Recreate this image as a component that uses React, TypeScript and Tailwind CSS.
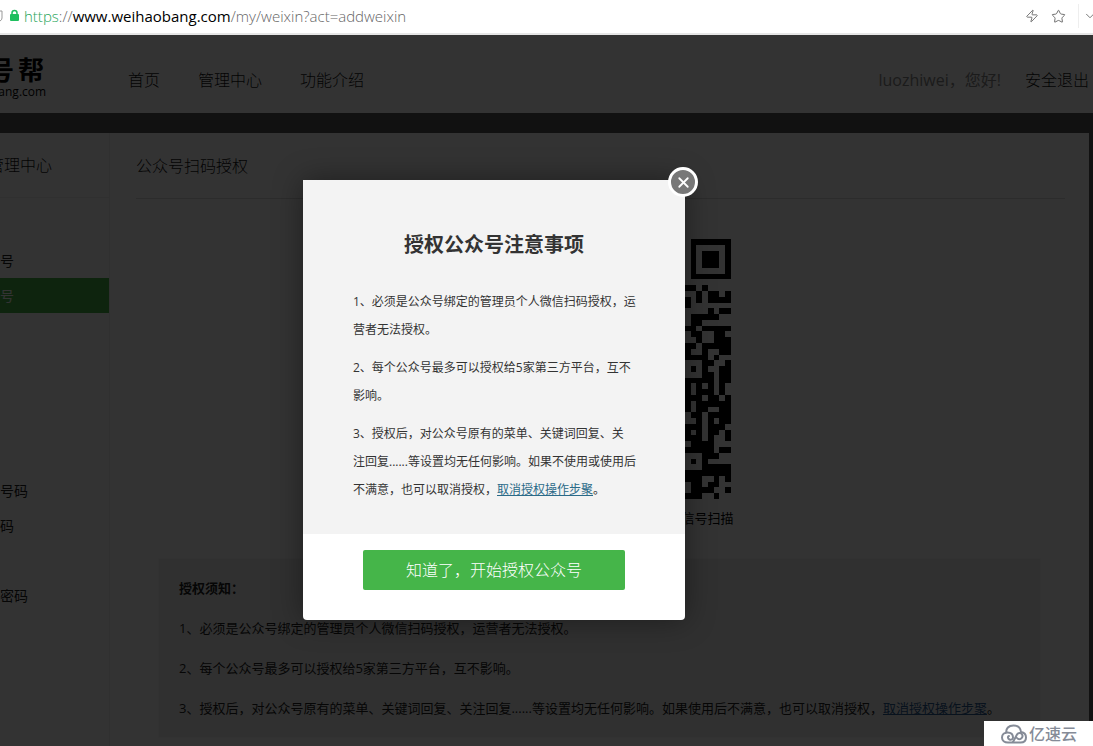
import { ChevronDown, Star, X, Zap } from 'lucide-react';

const navLinks = ['首页', '管理中心', '功能介绍'];

const accountItems = [
  { label: '号', active: false },
  { label: '号', active: true },
];

const notices = [
  '1、必须是公众号绑定的管理员个人微信扫码授权，运营者无法授权。',
  '2、每个公众号最多可以授权给5家第三方平台，互不影响。',
];

// one string per row, 1 = dark module
const qrRows = [
  '01111111', '01000001', '01011101', '01011101', '01011101', '01000001', '01111111', '00000000',
  '11010000', '00101101', '10101111', '10000000', '00001011', '01111100', '01100000', '11011111',
  '01100110', '00100111', '11011111', '10010011', '11110100', '00011001', '01010011', '00011011',
  '11111011', '10101010', '10111010', '11101101', '10111111', '10110011', '01101111', '00101011',
  '11101110', '10101101', '11101001', '01111000', '11111011', '00011100', '01010000', '00011111',
  '11111111', '11100101', '01101100', '01111001', '11100100',
];

function QrCode() {
  return (
    <svg viewBox="0 0 45 45" className="h-[260px] w-[260px]" shapeRendering="crispEdges" aria-label="二维码">
      {qrRows.map((row, y) =>
        row.split('').map((cell, x) =>
          cell === '1' ? <rect key={`${x}-${y}`} x={x + 37} y={y} width="1" height="1" fill="#000" /> : null
        )
      )}
    </svg>
  );
}

function AddressBar() {
  return (
    <div className="flex h-[35px] items-center overflow-hidden border-b-2 border-[#e6e6e6] bg-white pb-px">
      <svg viewBox="0 0 24 14" className="h-[14px] w-6 shrink-0" fill="none">
        <path d="M0 2h2v7q0 2-2 3" stroke="#999" />
        <rect x="10" y="5" width="9" height="7" rx="1" fill="#1fbf5f" />
        <path d="M12 6V4a2.5 2.5 0 0 1 5 0v2" stroke="#1fbf5f" strokeWidth="1.5" />
      </svg>
      <p className="flex-1 text-[15px] leading-5 font-light whitespace-nowrap text-[#666]">
        <span className="text-[#1fa55a]">https</span>://
        <span className="font-normal text-black">www.weihaobang.com</span>/my/weixin?act=addweixin
      </p>
      <div className="flex shrink-0 items-center text-[#666]">
        <button aria-label="加速"><Zap size={14} strokeWidth={1.5} /></button>
        <button aria-label="收藏" className="ml-3"><Star size={15} strokeWidth={1.5} /></button>
        <span className="ml-3 h-6 w-px bg-[#eee]" />
        <button aria-label="更多" className="-mr-1 ml-1"><ChevronDown size={14} strokeWidth={1.5} /></button>
      </div>
    </div>
  );
}

function Header() {
  return (
    <header className="flex h-[78px] items-center bg-white pr-1 pt-3 text-base font-light text-[#111]">
      <div className="-ml-3 w-[140px] pb-1 text-black">
        <div className="flex gap-1 text-[26px] leading-7 font-bold">
          <span>号</span>
          <span>帮</span>
        </div>
        <div className="pl-[3px] text-xs leading-4 font-normal">bang.com</div>
      </div>
      <nav className="flex flex-1 gap-[38px]">
        {navLinks.map((link) => (
          <a key={link} href="#">{link}</a>
        ))}
      </nav>
      <span className="font-normal text-[#888]">luozhiwei，您好!</span>
      <a href="#" className="ml-6">安全退出</a>
    </header>
  );
}

function Sidebar() {
  return (
    <aside className="w-[110px] shrink-0 overflow-hidden border-r border-[#eee] text-sm leading-[35px] text-[#222]">
      <h2 className="-ml-3 h-[65px] border-b border-[#eee] text-base leading-[65px] font-light text-[#111]">管理中心</h2>
      <ul className="pt-[45px]">
        {accountItems.map((item, i) => (
          <li key={i}>
            <a href="#" className={item.active ? 'block bg-[#45b549] text-white' : 'block'}>{item.label}</a>
          </li>
        ))}
      </ul>
      <ul className="pt-[160px]">
        <li><a href="#" className="block">号码</a></li>
        <li><a href="#" className="block">码</a></li>
        <li className="pt-[35px]"><a href="#" className="block">密码</a></li>
      </ul>
    </aside>
  );
}

function AuthorizeModal() {
  return (
    <div className="absolute inset-0 flex items-start justify-center bg-black/80 pr-[105px] pt-[145px]">
      <div role="dialog" aria-labelledby="dialog-title" className="relative w-[382px] rounded-sm bg-white shadow-[0_0_30px_rgba(0,0,0,0.4)]">
        <button
          aria-label="关闭"
          className="absolute -right-[13px] -top-[13px] flex h-[30px] w-[30px] items-center justify-center rounded-full border-3 border-white bg-[#777] text-white"
        >
          <X size={17} strokeWidth={2.5} />
        </button>
        <div className="h-[354px] bg-[#f3f3f3] px-[50px] pt-[49px] text-xs leading-7 text-[#333]">
          <h1 id="dialog-title" className="mb-[27px] text-center text-xl leading-8 font-bold">授权公众号注意事项</h1>
          <div className="-mr-1 space-y-[10px]">
            <p>1、必须是公众号绑定的管理员个人微信扫码授权，运<br />营者无法授权。</p>
            <p>2、每个公众号最多可以授权给5家第三方平台，互不<br />影响。</p>
            <p>
              3、授权后，对公众号原有的菜单、关键词回复、关<br />
              注回复......等设置均无任何影响。如果不使用或使用后<br />
              不满意，也可以取消授权，<a href="#" className="text-[#2a6a88] underline">取消授权操作步聚</a>。
            </p>
          </div>
        </div>
        <div className="px-[60px] pb-[30px] pt-4">
          <button className="h-10 w-full rounded-xs bg-[#45b549] text-base font-light text-white">知道了，开始授权公众号</button>
        </div>
      </div>
    </div>
  );
}

function Watermark() {
  return (
    <div className="absolute bottom-0 right-0 flex h-[25px] w-[109px] items-center justify-end gap-[2px] bg-white pr-4 text-base text-[#858b97]">
      <svg viewBox="0 0 26 20" className="h-5 w-[26px]" fill="none" stroke="currentColor" strokeWidth="2" strokeLinecap="round">
        <path d="M5 9C5 4 8 1.500 12.500 1.500C16.500 1.500 19.500 4 20 8C23 8.500 25 10.500 25 13.500C25 16.500 23 18.500 19.500 18.500H7C3.500 18.500 1 16.500 1 13.500C1 10.500 3.500 8.500 6.500 8.500C10 8.500 12 10.500 12 13.500C12 15.500 10 16 8.500 15.500C6.500 14.500 6.500 12.500 8 12" />
        <path d="M12 18L16 10.500C17.500 8 21 8.500 21.500 11.500C22 14.500 18 16.500 16 14" />
      </svg>
      <span className="font-medium whitespace-nowrap">亿速云</span>
    </div>
  );
}

export default function App() {
  return (
    <div className="flex h-screen flex-col overflow-hidden font-['Open_Sans','Noto_Sans_CJK_SC',sans-serif]">
      <AddressBar />
      <div className="relative flex flex-1 flex-col overflow-hidden bg-[#555]">
        <Header />
        <div className="mr-1 mt-5 flex flex-1 bg-white">
          <Sidebar />
          <main className="flex-1 pl-[26px] pr-6 text-[13px] text-[#222]">
            <h2 className="h-[66px] border-b border-[#ddd] text-base leading-[66px] font-light text-[#111]">公众号扫码授权</h2>
            <div className="mx-auto mt-10 w-[266px]">
              <div className="flex justify-center"><QrCode /></div>
              <p className="h-[59px] pt-[9px] text-right leading-5 text-black">微信号扫描</p>
            </div>
            <section className="ml-[22px] mr-6 border border-[#f8f8f8] bg-[#f0f0f0] px-5 py-[9px] leading-10">
              <h3 className="font-bold">授权须知：</h3>
              {notices.map((notice) => (
                <p key={notice}>{notice}</p>
              ))}
              <p className="whitespace-nowrap">
                3、授权后，对公众号原有的菜单、关键词回复、关注回复......等设置均无任何影响。如果使用后不满意，也可以取消授权，
                <a href="#" className="text-[#2a5a90] underline">取消授权操作步聚</a>。
              </p>
            </section>
          </main>
        </div>
        <AuthorizeModal />
        <Watermark />
      </div>
    </div>
  );
}
